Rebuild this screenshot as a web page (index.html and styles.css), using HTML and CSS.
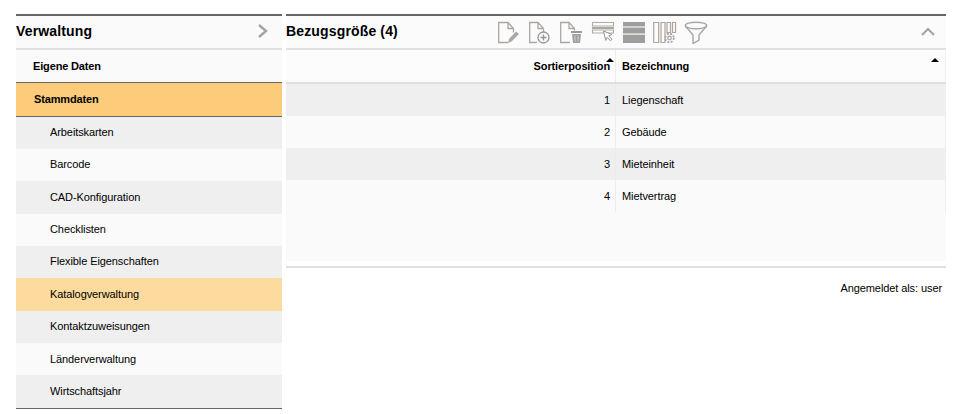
FILE: index.html
```html
<!DOCTYPE html>
<html lang="de">
<head>
<meta charset="utf-8">
<title>Bezugsgröße</title>
<link rel="stylesheet" href="styles.css">
</head>
<body>
<div class="page">
  <aside class="side">
    <div class="head">
      <span class="title">Verwaltung</span>
      <svg class="chev" width="12" height="14" viewBox="0 0 12 14"><path d="M2 1l7 6-7 6" fill="none" stroke="#a3a3a3" stroke-width="2.4"/></svg>
    </div>
    <div class="lvl1">Eigene Daten</div>
    <div class="lvl1 active">Stammdaten</div>
    <div class="sub odd">Arbeitskarten</div>
    <div class="sub">Barcode</div>
    <div class="sub odd">CAD-Konfiguration</div>
    <div class="sub">Checklisten</div>
    <div class="sub odd">Flexible Eigenschaften</div>
    <div class="sub current">Katalogverwaltung</div>
    <div class="sub odd">Kontaktzuweisungen</div>
    <div class="sub">Länderverwaltung</div>
    <div class="sub odd">Wirtschaftsjahr</div>
  </aside>
  <main class="content">
    <div class="head">
      <span class="title">Bezugsgröße (4)</span>
      <div class="tools">
        <svg width="24" height="24" viewBox="0 0 24 24" fill="none" stroke="#aea69e" stroke-width="1.3"><path d="M10 22.500H.7V2.500h9.300l5.500 6v4M10 2.500v6h5.500"/><path d="M10 23l1-4 7-7.500 3 2.500-7.500 7.500z" fill="#a8a8a8" stroke="none"/></svg>
        <svg width="24" height="24" viewBox="0 0 24 24" fill="none" stroke="#aea69e" stroke-width="1.300"><path d="M8 22.500H.7V2.500h8.300l5.500 6v3.500M9 2.500v6h5.500"/><circle cx="14.500" cy="17.500" r="5.500" stroke="#949494"/><path d="M11.500 17.500h6M14.500 14.500v6" stroke="#949494"/></svg>
        <svg width="24" height="24" viewBox="0 0 24 24" fill="none" stroke="#aea69e" stroke-width="1.300"><path d="M10 22.500H.7V2.500h8.300l5.500 6v2M9 2.500v6h5.500"/><path d="M11 12h11" stroke="#999" stroke-width="2"/><path d="M12 14h9l-1 9h-7z" fill="#a0a0a0" stroke="none"/><path d="M15 15.500v6M18 15.500v6" stroke="#d0d0d0" stroke-width="1"/></svg>
        <svg width="24" height="24" viewBox="0 0 24 24" fill="none"><path d="M1.500 2.500h21v3.500h-21zM1.500 10h21v3h-21z" stroke="#b3aba3" stroke-width="1.100"/><path d="M1 8h22" stroke="#a0a0a0" stroke-width="1.800"/><path d="M12.500 11l8.500 3.500-3.300 1.300 3.300 3.400-1.500 1.600-3.400-3.400-1.400 3z" fill="#fff" stroke="#959595" stroke-width="1"/></svg>
        <svg width="24" height="24" viewBox="0 0 24 24"><path d="M1 2h22v4.500H1zM1 7.500h22v6H1zM1 15h22v8H1z" fill="#9e9e9e"/><path d="M1 7h22M1 14.300h22" stroke="#dcd6cf" stroke-width="1"/></svg>
        <svg width="24" height="24" viewBox="0 0 24 24" fill="none" stroke="#a6a6a6" stroke-width="1.200"><path d="M.7 2.500h5v20h-5zM8 2.500h4v20H8z" stroke="#aea69e"/><path d="M14 2.500h3.500v10H14zM19.500 2.500h3v10h-3z" stroke="#aea69e"/><circle cx="16.500" cy="18" r="1.800"/><circle cx="16.500" cy="18" r="4.300" stroke-dasharray="2 1.400" stroke-width="1.800"/></svg>
        <svg width="24" height="24" viewBox="0 0 24 24" fill="none" stroke="#a6a6a6" stroke-width="1.400"><ellipse cx="12" cy="5.500" rx="10.700" ry="3.300"/><path d="M1.300 6L9 15v8.500l6-3.500v-5l7.700-9"/></svg>
      </div>
      <svg class="collapse" width="16" height="10" viewBox="0 0 16 10"><path d="M2 8l6-6 6 6" fill="none" stroke="#a3a3a3" stroke-width="2"/></svg>
    </div>
    <div class="grid">
      <div class="row header">
        <div class="c1 hcell">Sortierposition<span class="sort s1"></span></div>
        <div class="c2 hcell">Bezeichnung<span class="sort s2"></span></div>
      </div>
      <div class="row odd"><div class="c1">1</div><div class="c2">Liegenschaft</div></div>
      <div class="row"><div class="c1">2</div><div class="c2">Gebäude</div></div>
      <div class="row odd"><div class="c1">3</div><div class="c2">Mieteinheit</div></div>
      <div class="row"><div class="c1">4</div><div class="c2">Mietvertrag</div></div>
      <div class="filler"></div>
    </div>
    <div class="login">Angemeldet als: user</div>
  </main>
</div>
</body>
</html>
```
FILE: styles.css
```css
* { box-sizing: border-box; }
html, body { margin: 0; padding: 0; background: #fff; }
body {
  font-family: "Liberation Sans", Arial, sans-serif;
  font-size: 11px;
  letter-spacing: -0.09px;
  color: #000;
  height: 414px;
  overflow: hidden;
}
.page {
  display: flex;
  gap: 4px;
  padding: 14px 16px 0;
}
.side { width: 266px; flex: none; border-bottom: 1px solid #666; height: 395px; display: flex; flex-direction: column; }
.content { width: 660px; flex: none; }
.head {
  height: 36px;
  display: flex;
  align-items: center;
  padding-bottom: 2px;
  border-top: 2px solid #666;
  border-bottom: 2px solid #e0e0e0;
  background: #fbfbfb;
  position: relative;
}
.side .head { padding-right: 13px; justify-content: space-between; background: #fafafa; }
.title { font-size: 14px; font-weight: bold; letter-spacing: 0.15px; }
.lvl1 {
  height: 32px;
  padding: 0 0 1px 17px;
  display: flex;
  align-items: center;
  font-weight: bold;
  letter-spacing: -0.15px;
  background: #fafafa;
  flex: none;
}
.lvl1.active {
  height: 34.7px;
  padding: 0 0 1px 18px;
  background: #fdcc7a;
  border-top: 1px solid #666;
  border-bottom: 1px solid #666;
}
.sub {
  height: 32.35px;
  flex: none;
  padding: 0 0 1.5px 34px;
  display: flex;
  align-items: center;
  background: #fafafa;
}
.sub.odd { background: #efefef; }
.sub.current { background: #fddb9e; }
.tools {
  position: absolute;
  left: 212px;
  top: 4px;
  display: flex;
  gap: 7px;
}
.collapse { position: absolute; right: 10px; top: 11px; }
.grid { height: 218px; background: #fff; border-bottom: 2px solid #e0e0e0; display: flex; flex-direction: column; }
.row { display: flex; height: 32px; background: #fafafa; flex: none; }
.row.odd { background: #efefef; }
.row.header { height: 34px; background: #fcfcfc; border-bottom: 2px solid #e0e0e0; font-weight: bold; letter-spacing: -0.12px; }
.c1 {
  width: 330px;
  padding-right: 5px;
  display: flex;
  align-items: center;
  justify-content: flex-end;
  border-right: 1px solid #ececec;
}
.c2 {
  flex: 1;
  padding-left: 6px;
  display: flex;
  align-items: center;
  border-right: 1px solid #efefef;
}
.hcell { position: relative; }
.sort {
  position: absolute;
  top: 8px;
  width: 0;
  height: 0;
  border-left: 4px solid transparent;
  border-right: 4px solid transparent;
  border-bottom: 4px solid #000;
}
.s1 { right: 1px; }
.s2 { right: 6px; }
.filler { height: 49px; background: #fafafa; }
.login { text-align: right; padding: 14px 4px 0 0; }
```
